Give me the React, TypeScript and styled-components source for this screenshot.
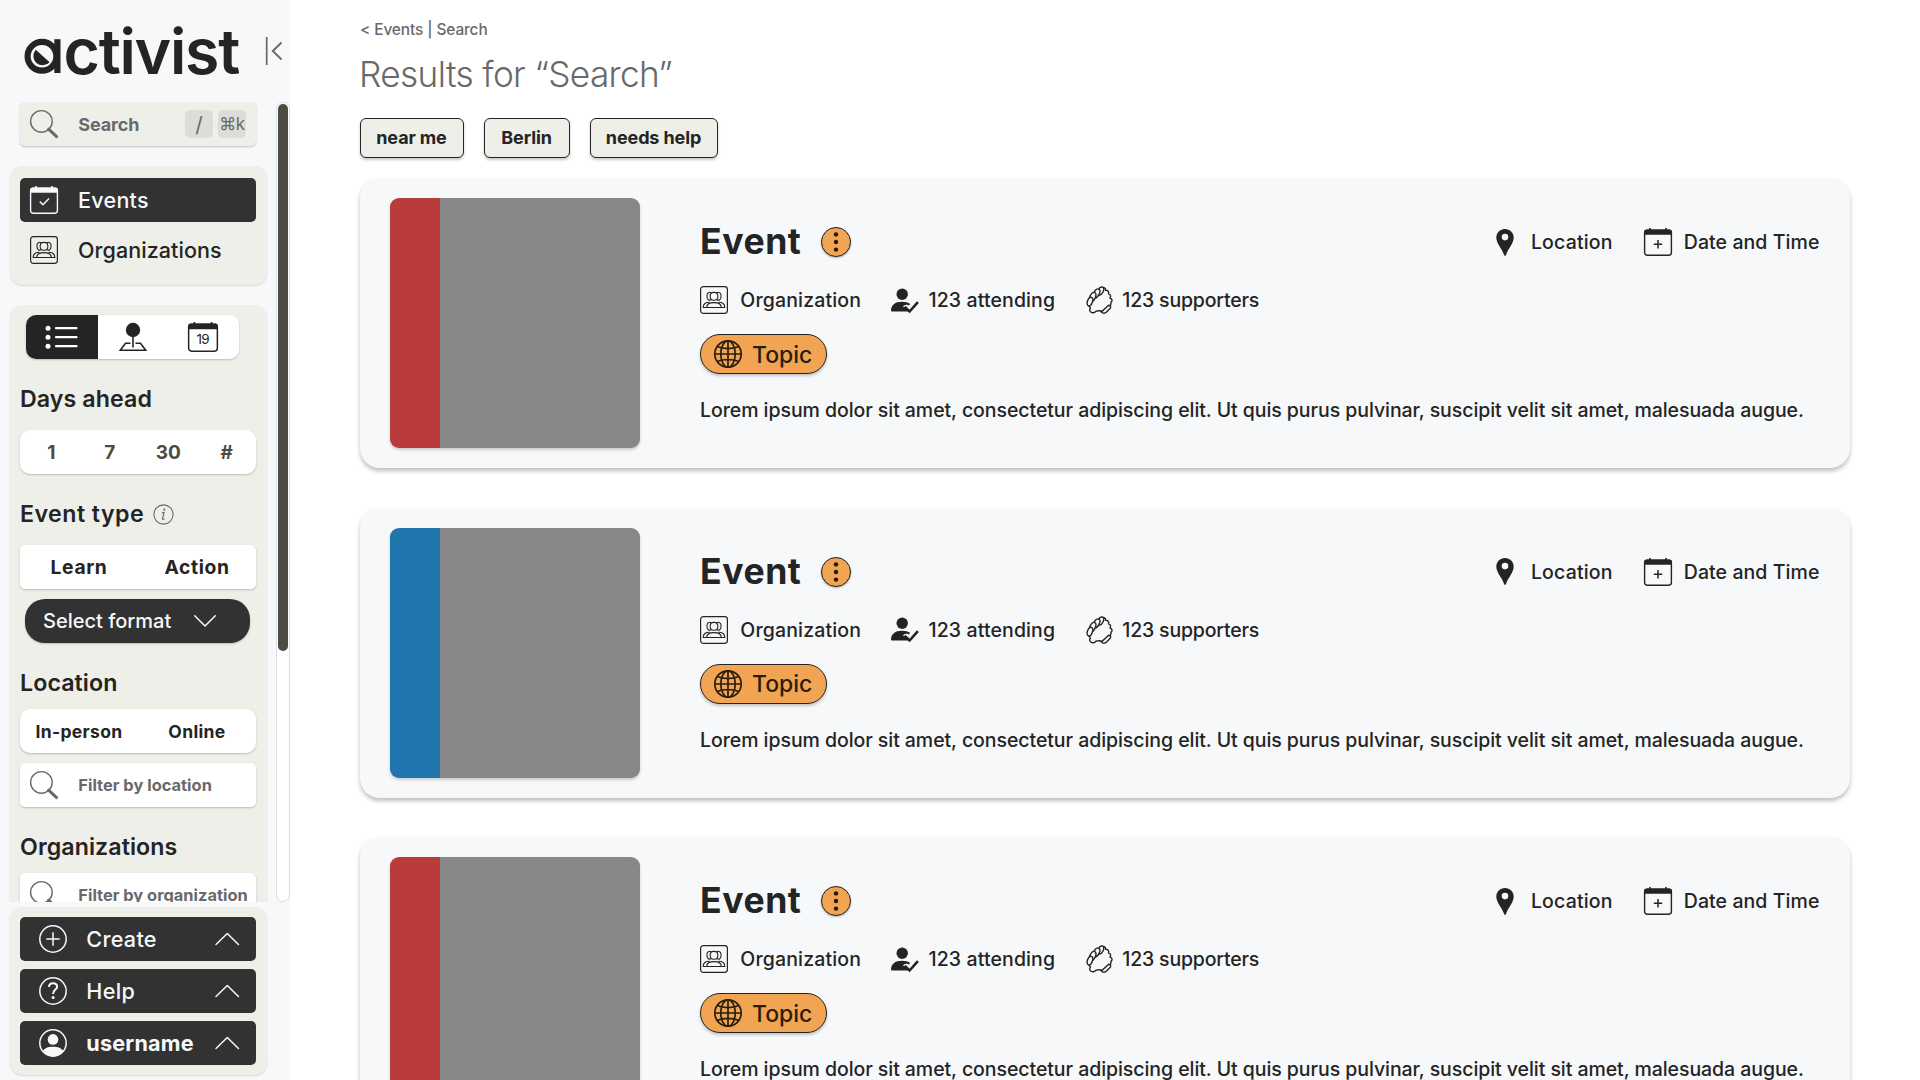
import React from 'react';
import styled, { createGlobalStyle, css } from 'styled-components';

const ink = '#242424';
const dark = '#323232';
const muted = '#696969';
const stone = '#eeefe9';
const mist = '#f6f8fa';
const orange = '#f1a553';
const liftShadow = '0 1px 2px rgba(0, 0, 0, 0.22)';

const GlobalStyle = createGlobalStyle`
  * { box-sizing: border-box; }
  body { margin: 0; background: #fff; overflow: hidden; color: ${ink}; font-family: Inter, "Liberation Sans", sans-serif; }
  button { font: inherit; color: inherit; border: 0; margin: 0; padding: 0; }
  svg { display: block; flex: none; overflow: visible; }
`;

const Page = styled.div`
  display: flex;
  width: 1920px;
  height: 1080px;
  overflow: hidden;
`;

/* Sidebar */

const Sidebar = styled.aside`
  display: flex;
  flex-direction: column;
  flex: none;
  width: 290px;
  height: 1080px;
  background: ${mist};
`;

const Brand = styled.header`
  display: flex;
  align-items: flex-start;
  height: 102px;
  padding: 19px 7px 0 24px;
`;

const Wordmark = styled.div`
  display: flex;
  align-items: flex-start;
  width: 241px;
  height: 64px;
  font-size: 62.5px;
  line-height: 64px;
  font-weight: 560;
  letter-spacing: -1.25px;
`;

const MarkLetter = styled.span`
  position: relative;
  flex: none;
  width: 39.5px;
  color: transparent;
  svg { position: absolute; left: 0; top: 19px; }
`;

const CollapseButton = styled.button`
  display: flex;
  margin-top: 17px;
  background: none;
  color: ${muted};
`;

const SidebarMiddle = styled.div`
  display: flex;
  justify-content: space-between;
  height: 800px;
`;

const SidebarColumn = styled.div`
  display: flex;
  flex-direction: column;
  width: 268px;
  height: 800px;
  padding-left: 10px;
  padding-right: 2px;
  overflow: hidden;
`;

const ScrollTrack = styled.div`
  width: 14px;
  height: 800px;
  padding: 1px;
  border: 1px solid #d9dfe8;
  border-radius: 7px;
  background: #fff;
`;

const ScrollThumb = styled.div`
  width: 10px;
  height: 547px;
  border-radius: 5px;
  background: #4c4c43;
`;

const SearchBox = styled.label<{ $surface: string; $top?: number; $size: number; $spacing?: number }>`
  display: flex;
  align-items: center;
  flex: none;
  width: 236px;
  height: 44px;
  margin: ${p => p.$top ?? 0}px 0 0 10px;
  padding: 0 10px;
  border-radius: 5px;
  background: ${p => p.$surface};
  box-shadow: ${liftShadow};
  color: ${muted};
  font-size: ${p => p.$size}px;
  font-weight: 700;
  letter-spacing: ${p => p.$spacing ?? 0}px;
  white-space: nowrap;
`;

const SearchText = styled.span`
  flex: 1;
  margin-left: 20.3px;
`;

const Keycap = styled.kbd<{ $size: number }>`
  display: flex;
  align-items: center;
  justify-content: center;
  width: 28px;
  height: 28px;
  margin-left: 5px;
  border-radius: 5px;
  background: #dcddd9;
  font-family: Inter, "DejaVu Sans", sans-serif;
  font-size: ${p => p.$size}px;
  font-weight: 400;
  letter-spacing: -0.3px;
`;

const Panel = styled.section`
  flex: none;
  width: 256.5px;
  border-radius: 13px;
  background: ${stone};
  box-shadow: 0 1px 2px rgba(0, 0, 0, 0.14);
`;

const NavPanel = styled(Panel)`
  display: flex;
  flex-direction: column;
  gap: 6px;
  height: 119px;
  margin-top: 20px;
  padding: 12px 10px 0;
`;

const NavItem = styled.a<{ $active?: boolean; $spacing: number }>`
  display: flex;
  align-items: center;
  gap: 20px;
  height: 44px;
  width: 236px;
  padding-left: 10px;
  border-radius: 5px;
  font-size: 21.5px;
  font-weight: 500;
  letter-spacing: ${p => p.$spacing}px;
  ${p => p.$active && css`background: ${dark}; color: ${mist};`}
`;

const FilterPanel = styled(Panel)`
  height: 680px;
  margin-top: 20px;
  padding-top: 10px;
`;

const ViewSwitch = styled.div`
  display: grid;
  grid-template-columns: 72px 70px 71.5px;
  width: 213.5px;
  height: 44px;
  margin-left: 15.5px;
  border-radius: 10px;
  overflow: hidden;
  background: #fff;
  box-shadow: ${liftShadow};
`;

const ViewOption = styled.button<{ $active?: boolean }>`
  display: flex;
  align-items: center;
  justify-content: center;
  background: ${p => (p.$active ? ink : '#fff')};
  color: ${p => (p.$active ? '#fff' : ink)};
`;

const FilterTitle = styled.h3<{ $top: number; $bottom: number; $spacing?: number }>`
  display: flex;
  align-items: center;
  gap: 9px;
  height: 28px;
  margin: ${p => p.$top}px 0 ${p => p.$bottom}px 10px;
  font-size: 23.2px;
  font-weight: 600;
  letter-spacing: ${p => p.$spacing ?? 0.08}px;
`;

const Segments = styled.div<{ $count: number; $radius: number; $size: number; $tone?: string; $spacing?: number }>`
  display: grid;
  grid-template-columns: repeat(${p => p.$count}, 1fr);
  align-items: center;
  justify-items: center;
  width: 236px;
  height: 44px;
  margin-left: 10px;
  padding-left: ${p => (p.$count === 4 ? 2 : 0)}px;
  border-radius: ${p => p.$radius}px;
  background: #fff;
  box-shadow: ${liftShadow};
  color: ${p => p.$tone ?? ink};
  font-size: ${p => p.$size}px;
  font-weight: 700;
  letter-spacing: ${p => p.$spacing ?? 0}px;
`;

const FormatSelect = styled.button`
  display: flex;
  align-items: center;
  gap: 23px;
  width: 225px;
  height: 44px;
  margin: 10px 0 0 15px;
  padding-left: 18px;
  border-radius: 20px;
  background: ${dark};
  box-shadow: ${liftShadow};
  color: ${mist};
  font-size: 20px;
  font-weight: 500;
`;

const AccountPanel = styled(Panel)`
  display: flex;
  flex-direction: column;
  gap: 8px;
  height: 168px;
  margin: 5px 0 0 10px;
  padding: 10px;
`;

const AccountButton = styled.button<{ $bold?: boolean; $spacing: number }>`
  display: flex;
  align-items: center;
  width: 236px;
  height: 44px;
  padding: 0 18px 0 19px;
  border-radius: 5px;
  background: ${dark};
  color: ${mist};
  font-size: 21.6px;
  font-weight: ${p => (p.$bold ? 700 : 500)};
  letter-spacing: ${p => p.$spacing}px;
`;

const AccountLabel = styled.span`
  flex: 1;
  margin-left: 19.3px;
  text-align: left;
`;

/* Results */

const Main = styled.main`
  display: flex;
  flex-direction: column;
  width: 1560px;
  padding: 20px 0 0 70px;
`;

const Breadcrumb = styled.nav`
  height: 20px;
  line-height: 20px;
  color: ${muted};
  font-size: 15.4px;
  font-weight: 500;
  letter-spacing: -0.09px;
`;

const PageTitle = styled.h1`
  height: 44px;
  margin: 12px 0 0 -1px;
  line-height: 44px;
  color: ${muted};
  font-size: 35.2px;
  font-weight: 300;
  letter-spacing: -0.62px;
`;

const Chips = styled.div`
  display: flex;
  gap: 20px;
  margin-top: 22px;
`;

const Chip = styled.button<{ $width: number }>`
  width: ${p => p.$width}px;
  height: 40px;
  padding: 0 1px 2px 0;
  border: 1px solid ${ink};
  border-radius: 6px;
  background: ${stone};
  box-shadow: 0 2px 3px rgba(0, 0, 0, 0.22);
  font-size: 18px;
  font-weight: 700;
  letter-spacing: -0.12px;
`;

const Results = styled.div`
  display: flex;
  flex-direction: column;
  gap: 39.6px;
  margin-top: 20px;
`;

const Card = styled.article`
  display: flex;
  flex: none;
  width: 1490px;
  height: 290px;
  padding: 20px 30px;
  border-radius: 20px;
  background: ${mist};
  box-shadow: 0 3px 4px rgba(0, 0, 0, 0.25);
`;

const Thumbnail = styled.div<{ $accent: string }>`
  flex: none;
  width: 250px;
  height: 250px;
  border-left: 50px solid ${p => p.$accent};
  border-radius: 9px;
  background: #898687;
  box-shadow: 0 2px 3px rgba(0, 0, 0, 0.18);
`;

const CardBody = styled.div`
  flex: 1;
  margin-left: 60px;
  padding-top: 24px;
  font-size: 19.5px;
  font-weight: 500;
`;

const CardHead = styled.div`
  display: flex;
  align-items: center;
  height: 40px;
`;

const CardTitle = styled.h2`
  width: 121px;
  margin: 0;
  font-size: 35.6px;
  line-height: 40px;
  font-weight: 700;
  letter-spacing: 0.55px;
`;

const MenuButton = styled.button`
  display: flex;
  align-items: center;
  justify-content: center;
  width: 30px;
  height: 30px;
  border: 1.5px solid ${ink};
  border-radius: 50%;
  background: ${orange};
  box-shadow: 0 1px 2px rgba(0, 0, 0, 0.3);
`;

const Facts = styled.div`
  display: flex;
  margin-left: auto;
  margin-right: 0.5px;
  gap: 31px;
`;

const Fact = styled.span<{ $gap: number; $spacing?: number }>`
  display: flex;
  align-items: center;
  gap: ${p => p.$gap}px;
  height: 28px;
  letter-spacing: ${p => p.$spacing ?? 0}px;
  white-space: nowrap;
`;

const MetaRow = styled.div`
  display: grid;
  grid-template-columns: 190.5px 195px auto;
  height: 28px;
  margin-top: 24px;
`;

const TopicPill = styled.button`
  display: flex;
  align-items: center;
  gap: 10px;
  width: 127px;
  height: 40px;
  margin-top: 20px;
  padding-left: 13px;
  border: 1.3px solid ${ink};
  border-radius: 20px;
  background: ${orange};
  box-shadow: 0 2px 3px rgba(0, 0, 0, 0.22);
  color: #2a1e0d;
  font-size: 23px;
  font-weight: 500;
`;

const TopicLabel = styled.span`
  padding-top: 1.5px;
`;

const Summary = styled.p`
  margin: 24px 0 0;
  line-height: 24px;
  letter-spacing: -0.06px;
  white-space: nowrap;
`;

/* Icons */

const Magnifier = () => (
  <svg width="28" height="28" viewBox="0 0 28 28" fill="none" stroke="currentColor">
    <circle cx="11.4" cy="11.4" r="10.8" strokeWidth="1.4" />
    <path d="M18.6 19.2L26.6 26.6" strokeWidth="3" strokeLinecap="round" />
  </svg>
);

const CalendarIcon = ({ mark, size = 28 }: { mark: 'check' | 'plus' | 'day'; size?: number }) => (
  <svg width={size} height={size} viewBox="0 0 28 28" fill="none" stroke="currentColor">
    <rect x="0.6" y="2.2" width="26.8" height="25" rx="2.6" strokeWidth="1.4" />
    <path d="M0 6.8V4A2.5 2.5 0 0 1 2.5 1.5H25.5A2.5 2.5 0 0 1 28 4V6.8Z" fill="currentColor" stroke="none" />
    <path d="M6 0V3M22 0V3" strokeWidth="1.6" />
    {mark === 'check' && <path d="M9.8 15.6L13 18.8L19 12.6" strokeWidth="1.5" />}
    {mark === 'plus' && <path d="M14 12V20.4M9.800 16.2H18.2" strokeWidth="1.5" />}
    {mark === 'day' && (
      <text x="13.8" y="20.6" textAnchor="middle" fill="currentColor" stroke="none" fontSize="12.6" fontWeight="400" letterSpacing="-0.5">19</text>
    )}
  </svg>
);

const OrganizationIcon = () => (
  <svg width="28" height="28" viewBox="0 0 28 28" fill="none" stroke="currentColor" strokeWidth="1.1">
    <rect x="0.6" y="0.6" width="26.8" height="26.8" rx="2.8" strokeWidth="1.2" />
    <rect x="10.2" y="6.4" width="7.6" height="7.8" rx="3.5" />
    <path d="M11.4 6.7C9 5.5 7 7 7 9.3V11C7 13.5 9 14.8 11.2 13.8M16.6 6.7C19 5.5 21 7 21 9.3V11C21 13.5 19 14.8 16.800 13.8" />
    <path d="M6.700 21.5C6.700 18 9.300 16.6 14 16.6S21.3 18 21.3 21.5Z" />
    <path d="M9.600 16.3C5.600 16.2 3.200 18 3.200 21.5H24.8C24.8 18 22.4 16.2 18.4 16.3" />
  </svg>
);

const ListIcon = () => (
  <svg width="33" height="24" viewBox="0 0 33 24" stroke="currentColor" strokeWidth="2.2" strokeLinecap="round">
    <path d="M11 3.2H31.5M11 12.2H31.5M11 21.2H31.5" />
    <g fill="currentColor" stroke="none">
      <circle cx="3" cy="3.2" r="2.5" />
      <circle cx="3" cy="12.2" r="2.5" />
      <circle cx="3" cy="21.2" r="2.5" />
    </g>
  </svg>
);

const MapPinIcon = () => (
  <svg width="28" height="28" viewBox="0 0 28 28" fill="none" stroke="currentColor" strokeWidth="1.6">
    <circle cx="14" cy="7" r="7.2" fill="currentColor" stroke="none" />
    <path d="M14 13V24.5" />
    <path d="M11.5 20.2H6.500L1.300 27.2H26.7L21.5 20.2H16.5" />
  </svg>
);

const InfoIcon = () => (
  <svg width="21" height="21" viewBox="0 0 21 21" fill="none" stroke={muted} strokeWidth="1.1">
    <circle cx="10.5" cy="10.5" r="9.6" />
    <path d="M8.800 8.8L11.1 8.5L9.5 14.6C9.3 15.6 10.2 15.7 11.5 14.6" />
    <circle cx="11.3" cy="5.6" r="1.1" fill={muted} stroke="none" />
  </svg>
);

const Chevron = ({ up }: { up?: boolean }) => (
  <svg width="22" height="12" viewBox="0 0 22 12" fill="none" stroke="currentColor" strokeWidth="1.5" strokeLinecap="round" strokeLinejoin="round">
    <path d={up ? 'M0 11.5L11.3 0.5L22.5 11.5' : 'M0.7 0.7L11 11L21.3 0.7'} />
  </svg>
);

const CreateIcon = () => (
  <svg width="28" height="28" viewBox="0 0 28 28" fill="none" stroke="currentColor" strokeWidth="1.5">
    <circle cx="14" cy="14" r="13.2" />
    <path d="M14 7.3V20.7M7.3 14H20.7" />
  </svg>
);

const HelpIcon = () => (
  <svg width="28" height="28" viewBox="0 0 28 28" fill="none" stroke="currentColor">
    <circle cx="14" cy="14" r="13.2" strokeWidth="1.5" />
    <path d="M10 10C10 7.6 11.7 6.3 14 6.3C16.4 6.3 18.1 7.7 18.1 9.8C18.1 12.6 14.1 12.7 14.1 16.9" strokeWidth="2" />
    <circle cx="14.1" cy="20.6" r="1.5" fill="currentColor" stroke="none" />
  </svg>
);

const UserIcon = () => (
  <svg width="28" height="28" viewBox="0 0 28 28" fill="none" stroke="currentColor">
    <circle cx="14" cy="14" r="13.2" strokeWidth="1.5" />
    <circle cx="14" cy="10.4" r="5.3" fill="currentColor" stroke="none" />
    <path d="M3.6 22.5C5.5 19 9 17.7 14 17.7S22.5 19 24.4 22.5C22 25.7 18.2 27.5 14 27.5S6 25.7 3.6 22.5Z" fill="currentColor" stroke="none" />
  </svg>
);

const AttendingIcon = () => (
  <svg width="28" height="25" viewBox="0 0 28 25" fill="currentColor">
    <circle cx="11.2" cy="6.2" r="5.7" />
    <path d="M0 23C0 17 4 13.7 11 13.7C14.5 13.7 17.3 14.5 19.2 16.1L17.8 17.6L15.7 16.4L12.3 18.3L17.5 23.5H1.2C0.4 23.5 0 23.3 0 23Z" />
    <path d="M13.600 18.8L18.6 23.500L26.9 14.2" fill="none" stroke="currentColor" strokeWidth="2.600" />
    <path d="M12.300 18.400L15.200 17.200L18.700 20.500" fill="none" stroke={mist} strokeWidth="0.900" />
  </svg>
);

const SupportIcon = () => (
  <svg width="27" height="28" viewBox="0 0 27 28" fill={mist} stroke="currentColor" strokeWidth="1.400" strokeLinejoin="round" strokeLinecap="round">
    <path d="M14.500 2.500C17 0.300 20 1.800 19.600 4.300C22 4.200 23.400 6 22.500 7.900C24.600 8.500 25.200 10.300 24 12C26.200 12.800 26.800 14.800 25 16.300C25.200 18.500 24 20.500 21.800 22L15 25.600L13.800 24.600L9.800 25.300C9 26.500 8.200 27 6.600 26.700C3.900 26.400 2.800 23.800 4.400 22.200L3 19.800" />
    <path d="M15.600 25.800L22.600 19.200C24.800 19.500 25.200 21.200 24 22.600L20.300 26.200C18.600 27.700 16.500 27.400 15.600 25.800Z" />
    <ellipse cx="14.600" cy="5" rx="2.600" ry="4.300" transform="rotate(28 14.600 5)" />
    <ellipse cx="10.500" cy="7.400" rx="2.700" ry="4.900" transform="rotate(28 10.500 7.400)" />
    <ellipse cx="6.600" cy="11" rx="2.700" ry="4.900" transform="rotate(26 6.600 11)" />
    <ellipse cx="3.900" cy="15.600" rx="2.500" ry="4.500" transform="rotate(20 3.900 15.600)" />
  </svg>
);

const PinIcon = () => (
  <svg width="18" height="27" viewBox="0 0 18 27" fill="currentColor">
    <path fillRule="evenodd" d="M9 0C14 0 17.7 3.7 17.7 8.6C17.7 14.5 12.2 19.5 9.9 26.2C9.6 27 8.5 27 8.2 26.2C5.9 19.5 0.3 14.5 0.3 8.6C0.3 3.7 4 0 9 0ZM9 4.8A3.3 3.3 0 1 0 9 11.4A3.3 3.3 0 1 0 9 4.8Z" />
  </svg>
);

const GlobeIcon = () => (
  <svg width="28" height="28" viewBox="0 0 28 28" fill="none" stroke="currentColor" strokeWidth="1.7">
    <circle cx="14" cy="14" r="13.2" />
    <ellipse cx="14" cy="14" rx="7.2" ry="13.2" />
    <path d="M14 0.8V27.2M0.8 14H27.2M3.2 6.5C9 9.2 19 9.2 24.8 6.5M3.2 21.5C9 18.8 19 18.8 24.8 21.5" />
  </svg>
);

const DotsIcon = () => (
  <svg width="6" height="20" viewBox="0 0 6 20" fill="#241a0c">
    <circle cx="3" cy="2.4" r="2.2" />
    <circle cx="3" cy="10" r="2.2" />
    <circle cx="3" cy="17.6" r="2.2" />
  </svg>
);

const CompassMark = () => (
  <svg width="38" height="36" viewBox="0 0 38 36">
    <circle cx="18" cy="18.3" r="14.4" fill="none" stroke={ink} strokeWidth="6.2" />
    <rect x="30.3" y="1.2" width="6.2" height="33.8" fill={ink} />
    <path d="M11.8 11.7L25.6 24.3A9.3 9.3 0 1 1 11.8 11.7Z" fill={ink} />
  </svg>
);

const CollapseIcon = () => (
  <svg width="17" height="29" viewBox="0 0 17 29" fill="none" stroke="currentColor">
    <path d="M1.7 1V29" strokeWidth="1.7" />
    <path d="M16.5 6.5L7.800 15L16.5 23.5" strokeWidth="1.9" />
  </svg>
);

const accents = ['#b93c3a', '#2176ae', '#b93c3a'];

const EventCard = ({ accent }: { accent: string }) => (
  <Card>
    <Thumbnail $accent={accent} />
    <CardBody>
      <CardHead>
        <CardTitle>Event</CardTitle>
        <MenuButton aria-label="Menu"><DotsIcon /></MenuButton>
        <Facts>
          <Fact $gap={16.5} $spacing={0.18}><PinIcon />Location</Fact>
          <Fact $gap={12} $spacing={0.08}><CalendarIcon mark="plus" />Date and Time</Fact>
        </Facts>
      </CardHead>
      <MetaRow>
        <Fact $gap={12.3} $spacing={0.16}><OrganizationIcon />Organization</Fact>
        <Fact $gap={10} $spacing={0.12}><AttendingIcon />123 attending</Fact>
        <Fact $gap={9.8} $spacing={-0.19}><SupportIcon />123 supporters</Fact>
      </MetaRow>
      <TopicPill><GlobeIcon /><TopicLabel>Topic</TopicLabel></TopicPill>
      <Summary>
        Lorem ipsum dolor sit amet, consectetur adipiscing elit. Ut quis purus pulvinar, suscipit velit sit amet, malesuada augue.
      </Summary>
    </CardBody>
  </Card>
);

export default function App() {
  return (
    <Page>
      <GlobalStyle />
      <Sidebar>
        <Brand>
          <Wordmark><MarkLetter>a<CompassMark /></MarkLetter>ctivist</Wordmark>
          <CollapseButton aria-label="Collapse"><CollapseIcon /></CollapseButton>
        </Brand>
        <SidebarMiddle>
          <SidebarColumn>
            <SearchBox $surface={stone} $size={18} $spacing={-0.12}>
              <Magnifier />
              <SearchText>Search</SearchText>
              <Keycap $size={21}>/</Keycap>
              <Keycap $size={17}>⌘k</Keycap>
            </SearchBox>
            <NavPanel>
              <NavItem $active $spacing={0.28}><CalendarIcon mark="check" />Events</NavItem>
              <NavItem $spacing={0.07}><OrganizationIcon />Organizations</NavItem>
            </NavPanel>
            <FilterPanel>
              <ViewSwitch>
                <ViewOption $active aria-label="List"><ListIcon /></ViewOption>
                <ViewOption aria-label="Map"><MapPinIcon /></ViewOption>
                <ViewOption aria-label="Calendar"><CalendarIcon mark="day" size={30} /></ViewOption>
              </ViewSwitch>
              <FilterTitle $top={26} $bottom={17}>Days ahead</FilterTitle>
              <Segments $count={4} $radius={10} $size={19} $tone="#4c4c43">
                <span>1</span><span>7</span><span>30</span><span>#</span>
              </Segments>
              <FilterTitle $top={26} $bottom={17} $spacing={0.45}>Event type<InfoIcon /></FilterTitle>
              <Segments $count={2} $radius={5} $size={19.3} $spacing={0.6}>
                <span>Learn</span><span>Action</span>
              </Segments>
              <FormatSelect>Select format<Chevron /></FormatSelect>
              <FilterTitle $top={26} $bottom={12}>Location</FilterTitle>
              <Segments $count={2} $radius={10} $size={17.5} $spacing={0.35}>
                <span>In-person</span><span>Online</span>
              </Segments>
              <SearchBox $surface="#fff" $top={10} $size={16.4} $spacing={0.02}>
                <Magnifier /><SearchText>Filter by location</SearchText>
              </SearchBox>
              <FilterTitle $top={26} $bottom={12}>Organizations</FilterTitle>
              <SearchBox $surface="#fff" $size={16.4} $spacing={0.01}>
                <Magnifier /><SearchText>Filter by organization</SearchText>
              </SearchBox>
            </FilterPanel>
          </SidebarColumn>
          <ScrollTrack><ScrollThumb /></ScrollTrack>
        </SidebarMiddle>
        <AccountPanel>
          <AccountButton $spacing={0.3}><CreateIcon /><AccountLabel>Create</AccountLabel><Chevron up /></AccountButton>
          <AccountButton $spacing={0.3}><HelpIcon /><AccountLabel>Help</AccountLabel><Chevron up /></AccountButton>
          <AccountButton $bold $spacing={0.2}><UserIcon /><AccountLabel>username</AccountLabel><Chevron up /></AccountButton>
        </AccountPanel>
      </Sidebar>
      <Main>
        <Breadcrumb>&lt; Events | Search</Breadcrumb>
        <PageTitle>Results for “Search”</PageTitle>
        <Chips>
          <Chip $width={104}>near me</Chip>
          <Chip $width={86}>Berlin</Chip>
          <Chip $width={128}>needs help</Chip>
        </Chips>
        <Results>
          {accents.map((accent, i) => <EventCard key={i} accent={accent} />)}
        </Results>
      </Main>
    </Page>
  );
}
